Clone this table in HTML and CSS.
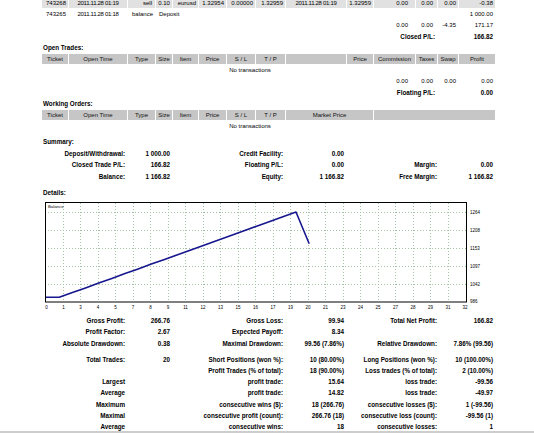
FILE: index.html
```html
<!DOCTYPE html>
<html>
<head>
<meta charset="utf-8">
<title>Statement</title>
<link rel="stylesheet" href="styles.css">
</head>
<body>
<div class="page">
  <table class="trades">
    <colgroup>
      <col class="w26"><col class="w58"><col class="w27"><col class="w16"><col class="w25"><col class="w27"><col class="w28"><col class="w29"><col class="w60"><col class="w26"><col class="w41"><col class="w21"><col class="w20"><col class="w36">
    </colgroup>
    <tr class="alt">
      <td>743268</td><td class="date">2011.11.28 01:19</td><td class="pr3">sell</td><td class="c">0.10</td><td>eurusd</td><td>1.32954</td><td>0.00000</td><td>1.32959</td><td class="date">2011.11.28 01:19</td><td>1.32959</td><td class="com">0.00</td><td class="tax">0.00</td><td class="swp">0.00</td><td>-0.38</td>
    </tr>
    <tr>
      <td>743265</td><td class="date">2011.11.28 01:18</td><td>balance</td><td colspan="10" class="l">Deposit</td><td>1 000.00</td>
    </tr>
    <tr>
      <td colspan="10"></td><td class="com">0.00</td><td class="tax">0.00</td><td class="swp">-4.35</td><td>171.17</td>
    </tr>
    <tr>
      <td colspan="10"></td><td colspan="2" class="b">Closed P/L:</td><td></td><td class="b">166.82</td>
    </tr>
    <tr><td colspan="14" class="title">Open Trades:</td></tr>
    <tr class="head">
      <td>Ticket</td><td>Open Time</td><td>Type</td><td>Size</td><td>Item</td><td>Price</td><td>S / L</td><td>T / P</td><td></td><td>Price</td><td>Commission</td><td>Taxes</td><td>Swap</td><td>Profit</td>
    </tr>
    <tr><td colspan="13" class="c">No transactions</td><td></td></tr>
    <tr>
      <td colspan="10"></td><td class="com">0.00</td><td class="tax">0.00</td><td class="swp">0.00</td><td>0.00</td>
    </tr>
    <tr>
      <td colspan="10"></td><td colspan="2" class="b">Floating P/L:</td><td></td><td class="b">0.00</td>
    </tr>
    <tr><td colspan="14" class="title">Working Orders:</td></tr>
    <tr class="head">
      <td>Ticket</td><td>Open Time</td><td>Type</td><td>Size</td><td>Item</td><td>Price</td><td>S / L</td><td>T / P</td><td colspan="2">Market Price</td><td colspan="4"></td>
    </tr>
    <tr><td colspan="13" class="c">No transactions</td><td></td></tr>
  </table>

  <div class="section-title summary-title">Summary:</div>
  <div class="grid summary">
    <div>Deposit/Withdrawal:</div><div>1 000.00</div><div>Credit Facility:</div><div>0.00</div><div></div><div></div>
    <div>Closed Trade P/L:</div><div>166.82</div><div>Floating P/L:</div><div>0.00</div><div>Margin:</div><div>0.00</div>
    <div>Balance:</div><div>1 166.82</div><div>Equity:</div><div>1 166.82</div><div>Free Margin:</div><div>1 166.82</div>
  </div>

  <div class="section-title details-title">Details:</div>

  <svg class="chart" width="450" height="110" viewBox="0 0 450 110">
    <g class="grid-lines">
      <line x1="0" y1="10.5" x2="421" y2="10.5"/>
      <line x1="0" y1="28.5" x2="421" y2="28.5"/>
      <line x1="0" y1="46.5" x2="421" y2="46.5"/>
      <line x1="0" y1="64.5" x2="421" y2="64.5"/>
      <line x1="0" y1="82.5" x2="421" y2="82.5"/>
      <line x1="18.5" y1="1" x2="18.5" y2="100"/>
      <line x1="35.5" y1="1" x2="35.5" y2="100"/>
      <line x1="53.5" y1="1" x2="53.5" y2="100"/>
      <line x1="70.5" y1="1" x2="70.5" y2="100"/>
      <line x1="88.5" y1="1" x2="88.5" y2="100"/>
      <line x1="105.5" y1="1" x2="105.5" y2="100"/>
      <line x1="123.5" y1="1" x2="123.5" y2="100"/>
      <line x1="140.5" y1="1" x2="140.5" y2="100"/>
      <line x1="158.5" y1="1" x2="158.5" y2="100"/>
      <line x1="175.5" y1="1" x2="175.5" y2="100"/>
      <line x1="193.5" y1="1" x2="193.5" y2="100"/>
      <line x1="210.5" y1="1" x2="210.5" y2="100"/>
      <line x1="228.5" y1="1" x2="228.5" y2="100"/>
      <line x1="245.5" y1="1" x2="245.5" y2="100"/>
      <line x1="263.5" y1="1" x2="263.5" y2="100"/>
      <line x1="280.5" y1="1" x2="280.5" y2="100"/>
      <line x1="298.5" y1="1" x2="298.5" y2="100"/>
      <line x1="315.5" y1="1" x2="315.5" y2="100"/>
      <line x1="333.5" y1="1" x2="333.5" y2="100"/>
      <line x1="350.5" y1="1" x2="350.5" y2="100"/>
      <line x1="368.5" y1="1" x2="368.5" y2="100"/>
      <line x1="385.5" y1="1" x2="385.5" y2="100"/>
      <line x1="403.5" y1="1" x2="403.5" y2="100"/>
    </g>
    <rect class="frame" x="0.5" y="0.5" width="421" height="99.5"/>
    <polyline class="balance" points="1,95.2 14.2,95.3 27.4,90.6 40.5,85.9 53.7,81.1 66.8,76.4 80,71.6 93.2,66.9 106.3,62.1 119.5,57.4 132.6,52.7 145.8,47.9 159,43.2 172.1,38.4 185.3,33.7 198.4,28.9 211.6,24.2 224.8,19.4 237.9,14.7 251,10 264.2,41.8"/>
    <text class="caption" x="3" y="6.3">Balance</text>
    <g class="ylabels">
      <text x="425" y="11.8">1264</text>
      <text x="425" y="29.8">1208</text>
      <text x="425" y="47.6">1153</text>
      <text x="425" y="65.6">1097</text>
      <text x="425" y="83.6">1042</text>
      <text x="425" y="101">986</text>
    </g>
    <g class="xlabels">
      <text x="1.5" y="106.8">0</text>
      <text x="18.5" y="106.8">1</text>
      <text x="35.5" y="106.8">3</text>
      <text x="53" y="106.8">4</text>
      <text x="70.5" y="106.8">5</text>
      <text x="88" y="106.8">7</text>
      <text x="105.5" y="106.8">8</text>
      <text x="123" y="106.8">9</text>
      <text x="140.5" y="106.8">11</text>
      <text x="158" y="106.8">12</text>
      <text x="175.5" y="106.8">13</text>
      <text x="193" y="106.8">15</text>
      <text x="210.5" y="106.8">16</text>
      <text x="228" y="106.8">17</text>
      <text x="245.5" y="106.8">19</text>
      <text x="263" y="106.8">20</text>
      <text x="280.5" y="106.8">21</text>
      <text x="298" y="106.8">23</text>
      <text x="315.5" y="106.8">24</text>
      <text x="333" y="106.8">25</text>
      <text x="350.5" y="106.8">27</text>
      <text x="368" y="106.8">28</text>
      <text x="385.5" y="106.8">29</text>
      <text x="403" y="106.8">31</text>
      <text x="420" y="106.8">32</text>
    </g>
  </svg>

  <div class="grid stats-a">
    <div>Gross Profit:</div><div>266.76</div><div>Gross Loss:</div><div>99.94</div><div>Total Net Profit:</div><div>166.82</div>
    <div>Profit Factor:</div><div>2.67</div><div>Expected Payoff:</div><div>8.34</div><div></div><div></div>
    <div>Absolute Drawdown:</div><div>0.38</div><div>Maximal Drawdown:</div><div>99.56 (7.86%)</div><div>Relative Drawdown:</div><div>7.86% (99.56)</div>
  </div>

  <div class="grid stats-b">
    <div>Total Trades:</div><div>20</div><div>Short Positions (won %):</div><div>10 (80.00%)</div><div>Long Positions (won %):</div><div>10 (100.00%)</div>
    <div></div><div></div><div>Profit Trades (% of total):</div><div>18 (90.00%)</div><div>Loss trades (% of total):</div><div>2 (10.00%)</div>
    <div>Largest</div><div></div><div>profit trade:</div><div>15.64</div><div>loss trade:</div><div>-99.56</div>
    <div>Average</div><div></div><div>profit trade:</div><div>14.82</div><div>loss trade:</div><div>-49.97</div>
    <div>Maximum</div><div></div><div>consecutive wins ($):</div><div>18 (266.76)</div><div>consecutive losses ($):</div><div>1 (-99.56)</div>
    <div>Maximal</div><div></div><div>consecutive profit (count):</div><div>266.76 (18)</div><div>consecutive loss (count):</div><div>-99.56 (1)</div>
    <div>Average</div><div></div><div>consecutive wins:</div><div>18</div><div>consecutive losses:</div><div>1</div>
  </div>

  <div class="bottom-rule"></div>
</div>
</body>
</html>
```

FILE: styles.css
```css
html {
  overflow: hidden;
}

body {
  margin: 0;
  background: #ffffff;
  color: #000000;
  font-family: "Liberation Sans", Arial, sans-serif;
}

.page {
  padding-left: 42px;
  width: 455px;
}

/* ---------- trades table ---------- */
.trades {
  border-collapse: separate;
  border-spacing: 1px;
  table-layout: fixed;
  width: 455px;
  margin: -3px 0 0 -1px;
}

.w16 { width: 16px; }
.w20 { width: 20px; }
.w21 { width: 21px; }
.w25 { width: 25px; }
.w26 { width: 26px; }
.w27 { width: 27px; }
.w28 { width: 28px; }
.w29 { width: 29px; }
.w36 { width: 36px; }
.w41 { width: 41px; }
.w58 { width: 58px; }
.w60 { width: 60px; }

.trades td {
  height: 10.2px;
  padding: 0 2px;
  font-size: 6px;
  line-height: 10px;
  text-align: right;
  vertical-align: middle;
  white-space: nowrap;
  overflow: hidden;
}

.trades .alt td {
  background: #e1e1e1;
}

.trades .head td {
  background: #c6c6c6;
  text-align: center;
  color: #111;
}

.trades td.date {
  text-align: center;
  letter-spacing: -0.3px;
}

.trades td.c { text-align: center; }
.trades td.l { text-align: left; padding-left: 3px; }
.trades td.pr3 { padding-right: 3px; }
.trades td.com { padding-right: 7px; }
.trades td.tax { padding-right: 4px; }
.trades td.swp { padding-right: 2px; }

.trades td.b {
  font-weight: bold;
  font-size: 6.3px;
}

.trades td.title {
  text-align: left;
  font-weight: bold;
  font-size: 6.3px;
  padding-left: 1px;
}

/* ---------- section titles ---------- */
.section-title {
  height: 11.2px;
  line-height: 11.2px;
  font-size: 6.3px;
  font-weight: bold;
  padding-left: 1px;
}

.summary-title { margin-top: 3.5px; }
.details-title { margin-top: 4.9px; }

/* ---------- label / value grids ---------- */
.grid {
  display: grid;
  grid-template-columns: 86px 45px 113px 61px 93px 56px;
  font-size: 6.3px;
  font-weight: bold;
}

.grid > div {
  text-align: right;
  padding-right: 3px;
  white-space: nowrap;
}

.summary {
  margin-top: 1.3px;
  grid-auto-rows: 11.2px;
  line-height: 11.2px;
}

.stats-a {
  margin-top: 3.4px;
  grid-auto-rows: 11.25px;
  line-height: 11.25px;
}

.stats-b {
  margin-top: 4.75px;
  grid-auto-rows: 11.25px;
  line-height: 11.25px;
}

/* ---------- chart ---------- */
.chart {
  display: block;
  margin: 3.9px 0 0 3px;
  font-family: "Liberation Sans", Arial, sans-serif;
}

.chart .grid-lines line {
  stroke: #a6c2a6;
  stroke-width: 1;
  stroke-dasharray: 1 2;
}

.chart .frame {
  fill: none;
  stroke: #000000;
  stroke-width: 1;
}

.chart .balance {
  fill: none;
  stroke: #16168f;
  stroke-width: 1.6;
  stroke-linejoin: round;
}

.chart .caption {
  font-size: 4.3px;
  fill: #000;
}

.chart .ylabels text {
  font-size: 4.5px;
  fill: #000;
}

.chart .xlabels text {
  font-size: 4.5px;
  fill: #000;
  text-anchor: middle;
}

/* ---------- bottom separator ---------- */
.bottom-rule {
  margin: -1.6px 0 0 -42px;
  width: 534px;
  height: 2px;
  background: #cdcdcd;
}
```
